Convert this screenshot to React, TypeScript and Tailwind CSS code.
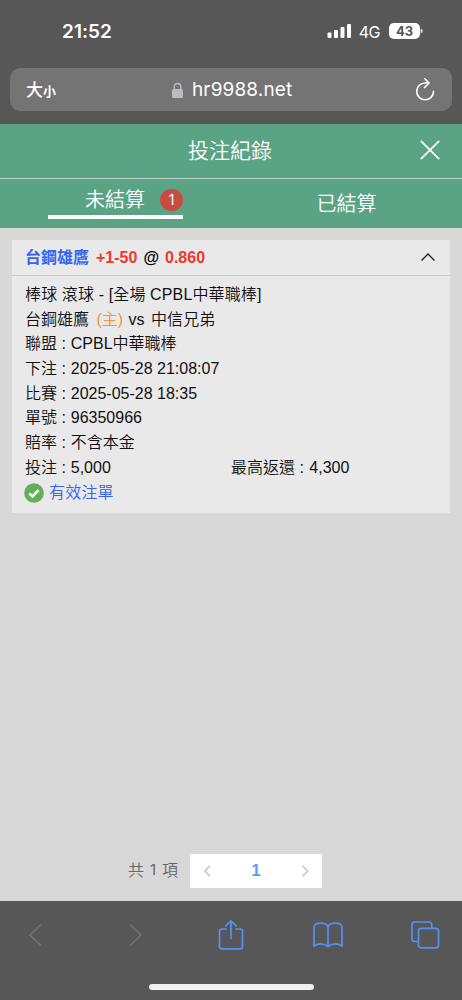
import React from 'react';

const details: [string, string][] = [
  ['聯盟', 'CPBL中華職棒'],
  ['下注', '2025-05-28 21:08:07'],
  ['比賽', '2025-05-28 18:35'],
  ['單號', '96350966'],
  ['賠率', '不含本金'],
];

function StatusBar() {
  return (
    <div className="flex h-[68px] items-start justify-between pl-[62px] pr-[39px] pt-[19px] font-['Inter','Noto_Sans_CJK_TC',sans-serif] text-white">
      <span className="pt-px text-[19px] font-semibold leading-6 tracking-[0.05px]">21:52</span>
      <div className="flex h-6 items-center">
        <svg width="25" height="16" viewBox="0 0 25 16" fill="currentColor">
          <rect x="0.5" y="9.5" width="4" height="5.5" rx="1" />
          <rect x="7" y="7" width="4" height="8" rx="1" />
          <rect x="13.5" y="4" width="4" height="11" rx="1" />
          <rect x="20" y="1" width="4" height="14" rx="1" />
        </svg>
        <span className="ml-[7px] pt-px text-[16px] tracking-[-0.5px]">4G</span>
        <div className="ml-[9px] flex h-4 w-[31px] items-center justify-center rounded-[5px] bg-white text-[13px] font-bold leading-4 text-[#575757]">43</div>
        <svg width="3" height="6" viewBox="0 0 3 6" fill="#ddd"><path d="M.7.5Q2.8 1.2 2.8 3T.7 5.5Z" /></svg>
      </div>
    </div>
  );
}

function AddressBar() {
  return (
    <div className="mx-[10px] flex h-[43px] items-center rounded-[10px] bg-[#747474] font-['Inter','Noto_Sans_CJK_TC',sans-serif] text-white">
      <div className="ml-4 flex w-[145px] items-baseline pt-px leading-6">
        <span className="text-[17px] font-medium">大</span>
        <span className="text-[13px] font-bold">小</span>
      </div>
      <svg className="mt-px shrink-0" width="13" height="17" viewBox="0 0 13 17">
        <rect x="1" y="7" width="11" height="9" rx="1.5" fill="#bcbbc1" />
        <path d="M3.2 7.5V4.8a3.3 3.3 0 0 1 6.6 0v2.7" fill="none" stroke="#bcbbc1" strokeWidth="1.4" />
      </svg>
      <span className="ml-2 pt-px text-[19px] leading-6 tracking-[0.13px]">hr9988.net</span>
      <svg className="ml-auto mr-[15px]" width="24" height="26" viewBox="0 0 24 26" fill="none" stroke="currentColor" strokeWidth="1.6" strokeLinecap="round" strokeLinejoin="round">
        <path d="M15.8 6H12A8.4 8.4 0 1 0 20.5 14.4" />
        <path d="M11.8 1.8l4.2 4.2-4.6 4.6" />
      </svg>
    </div>
  );
}

function Tabs() {
  return (
    <div className="grid h-[50px] grid-cols-2 border-t border-[#bcd1c7] text-[20px] font-[350] leading-6 text-white">
      <div className="ml-12 w-[135px]">
        <div className="flex h-[36px] items-center justify-end pt-[5px]">
          <span className="mr-[15px]">未結算</span>
          <span className="flex h-[22px] w-[23px] items-center justify-center rounded-full bg-[#c84c42] font-['Inter'] text-[14px] font-normal leading-none">1</span>
        </div>
        <div className="h-[3.5px] bg-white" />
      </div>
      <div className="flex items-center justify-center">已結算</div>
    </div>
  );
}

function BetCard() {
  return (
    <section className="mx-3 mt-3 h-[273px] bg-[#e9e9e9] text-[16px] text-[#111]">
      <header className="flex h-[36px] items-center border-b border-[#cccccc] pl-[13px] pr-[14px] font-bold">
        <span className="whitespace-pre"><span className="text-[#3565ee]">台鋼雄鷹</span><span className="ml-[7px] text-[#ee3a2a]">+1-50</span><span className="ml-[6px] mr-[6px] text-black">@</span><span className="text-[#ee3a2a]">0.860</span></span>
        <svg className="-mt-[2px] ml-auto" width="16" height="12" viewBox="0 0 16 12" fill="none" stroke="#222" strokeWidth="1.4"><path d="M1.5 9.5L8 3l6.5 6.5" /></svg>
      </header>
      <div className="pl-[13px] pt-[7px] font-[350] leading-[24.65px]">
        <p className="tracking-[0.13px]">棒球 滾球 - [全場 CPBL中華職棒]</p>
        <p>台鋼雄鷹 <span className="ml-[3px] mr-px text-[#f39436]">(主)</span> vs <span className="ml-[2px] tracking-[0.1px]">中信兄弟</span></p>
        {details.map(([label, value]) => <p key={label}>{label} : <span className="ml-[0.4px]">{value}</span></p>)}
        <div className="flex">
          <p className="w-[206px]">投注 : <span className="ml-[0.4px]">5,000</span></p>
          <p>最高返還 : <span className="ml-px">4,300</span></p>
        </div>
        <div className="flex h-[26px] items-center text-[#3565ee]">
          <svg className="-ml-px mr-[5px]" width="20" height="20" viewBox="0 0 20 20">
            <circle cx="10" cy="10" r="9.8" fill="#64ae5b" />
            <path d="M5.3 10.3l3.1 3.1 6.2-6.3" fill="none" stroke="#fff" strokeWidth="2.5" />
          </svg>
          <span className="tracking-[0.2px]">有效注單</span>
        </div>
      </div>
    </section>
  );
}

function Pagination() {
  return (
    <div className="mb-[13px] mt-auto flex h-[34px] items-center pl-[128px] text-[16px] font-[350] text-[#666]">
      <div className="flex w-[50px] justify-between"><span>共</span><span className="font-['Inter'] text-[15px] font-normal">1</span><span>項</span></div>
      <div className="ml-3 flex h-[34px] w-[132px] items-center justify-between bg-white px-[13px]">
        <svg width="8" height="12" viewBox="0 0 8 12" fill="none" stroke="#bfc2c8" strokeWidth="1.4"><path d="M7 .8L1.8 6 7 11.2" /></svg>
        <span className="font-bold text-[#559bf7]">1</span>
        <svg width="8" height="12" viewBox="0 0 8 12" fill="none" stroke="#bfc2c8" strokeWidth="1.4"><path d="M1.5.8L6.7 6l-5.2 5.2" /></svg>
      </div>
    </div>
  );
}

function BrowserToolbar() {
  return (
    <footer className="h-[99px] bg-[#575757] text-[#5590f5]">
      <div className="flex h-[68px] items-center pl-[28px]">
        <svg width="15" height="24" viewBox="0 0 15 24" fill="none" stroke="#737373" strokeWidth="1.6"><path d="M13 1.5L2 12l11 10.5" /></svg>
        <svg className="ml-[85px]" width="15" height="24" viewBox="0 0 15 24" fill="none" stroke="#737373" strokeWidth="1.6"><path d="M2 1.5L13 12 2 22.5" /></svg>
        <svg className="ml-[75px]" width="26" height="32" viewBox="0 0 26 32" fill="none" stroke="currentColor" strokeWidth="1.7" strokeLinecap="round" strokeLinejoin="round">
          <path d="M8 10H3.8Q1.5 10 1.5 12.3v15.2q0 2.3 2.3 2.3h18.4q2.3 0 2.3-2.3V12.3q0-2.3-2.3-2.3H18M13 19.5V2M7.8 7L13 1.8 18.2 7" />
        </svg>
        <svg className="ml-[68px]" width="32" height="26" viewBox="0 0 32 26" fill="none" stroke="currentColor" strokeWidth="1.7" strokeLinejoin="round">
          <path d="M16 24.5Q9 19.5 2 24V5.2Q2 1.2 8.5 1.2T16 5.2V24.5Q23 19.5 30 24V5.2Q30 1.2 23.5 1.2T16 5.2" />
        </svg>
        <svg className="ml-[66px]" width="30" height="28" viewBox="0 0 30 28" fill="none" stroke="currentColor" strokeWidth="1.7">
          <path d="M8 20.5H4.8Q2 20.5 2 17.7V3.8Q2 1 4.8 1H19q2.8 0 2.8 2.8V7" />
          <rect x="8.5" y="7.3" width="20" height="19.5" rx="2.8" />
        </svg>
      </div>
      <div className="mx-auto mt-[15px] h-[6px] w-[165px] rounded-full bg-[#f0f0f0]" />
    </footer>
  );
}

export default function App() {
  return (
    <div className="flex h-[1000px] w-[462px] flex-col overflow-hidden bg-[#d8d8d8] font-['Liberation_Sans','Noto_Sans_CJK_TC',sans-serif]">
      <div className="h-[124px] shrink-0 bg-[#575757]">
        <StatusBar />
        <AddressBar />
      </div>
      <div className="h-[104px] shrink-0 bg-[#5ba385]">
        <div className="grid h-[54px] grid-cols-[1fr_auto_1fr] items-center pr-[22px] text-white">
          <h1 className="col-start-2 pl-[20px] text-[21px] font-[350] leading-6">投注紀錄</h1>
          <svg className="-mt-[2px] justify-self-end" width="20" height="20" viewBox="0 0 20 20" fill="none" stroke="currentColor" strokeWidth="1.7"><path d="M.8.8l18.4 18.4M19.2.8L.8 19.2" /></svg>
        </div>
        <Tabs />
      </div>
      <BetCard />
      <Pagination />
      <BrowserToolbar />
    </div>
  );
}
